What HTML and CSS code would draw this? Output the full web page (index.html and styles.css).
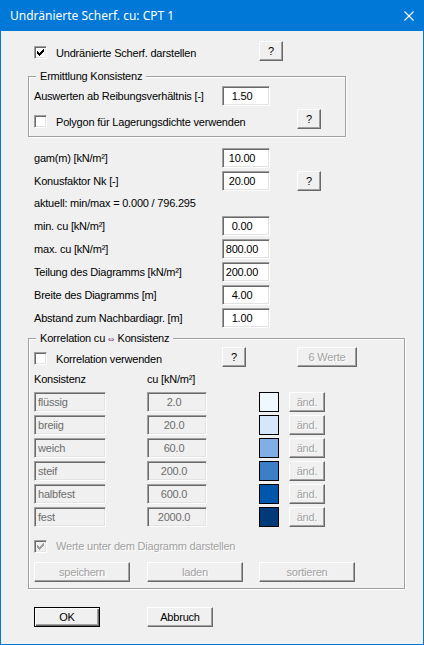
FILE: index.html
```html
<!DOCTYPE html>
<html lang="de">
<head>
<meta charset="utf-8">
<title>Undränierte Scherf. cu: CPT 1</title>
<link rel="stylesheet" href="styles.css">
</head>
<body>
<div class="window">
  <div class="titlebar">
    <span class="title">Undränierte Scherf. cu: CPT 1</span>
    <svg class="close" width="10" height="10" viewBox="0 0 10 10"><path d="M0.5 0.5L9.5 9.5M9.5 0.5L0.5 9.5" stroke="#fff" stroke-width="1.1" fill="none"/></svg>
  </div>

  <div class="client">
    <div class="row row-top">
      <label class="check w-225 drop-5"><span class="cb"><svg class="tick" width="7" height="7" viewBox="0 0 7 7"><path d="M0 2h1v3h-1zM1 3h1v3h-1zM2 4h1v3h-1zM3 3h1v3h-1zM4 2h1v3h-1zM5 1h1v3h-1zM6 0h1v3h-1z"/></svg></span><span>Undränierte Scherf. darstellen</span></label>
      <span class="btn q">?</span>
    </div>

    <div class="group g-konsistenz">
      <span class="legend">Ermittlung Konsistenz</span>
      <div class="row">
        <span class="lbl">Auswerten ab Reibungsverhältnis [-]</span>
        <span class="edit">1.50</span>
      </div>
      <div class="row mt-3">
        <label class="check w-263 drop-6"><span class="cb"></span><span>Polygon für Lagerungsdichte verwenden</span></label>
        <span class="btn q">?</span>
      </div>
    </div>

    <div class="row mt-11">
      <span class="lbl">gam(m) [kN/m²]</span>
      <span class="edit">10.00</span>
    </div>
    <div class="row mt-3">
      <span class="lbl">Konusfaktor Nk [-]</span>
      <span class="edit">20.00</span>
      <span class="btn q gap-27">?</span>
    </div>
    <div class="row mt-2">
      <span class="lbl">aktuell: min/max = 0.000 / 796.295</span>
    </div>
    <div class="row mt-3">
      <span class="lbl">min. cu [kN/m²]</span>
      <span class="edit">0.00</span>
    </div>
    <div class="row mt-3">
      <span class="lbl">max. cu [kN/m²]</span>
      <span class="edit">800.00</span>
    </div>
    <div class="row mt-3">
      <span class="lbl">Teilung des Diagramms [kN/m²]</span>
      <span class="edit">200.00</span>
    </div>
    <div class="row mt-3">
      <span class="lbl">Breite des Diagramms [m]</span>
      <span class="edit">4.00</span>
    </div>
    <div class="row mt-3">
      <span class="lbl">Abstand zum Nachbardiagr. [m]</span>
      <span class="edit">1.00</span>
    </div>

    <div class="group g-korrelation">
      <span class="legend">Korrelation cu <span class="arrow">⇔</span> Konsistenz</span>
      <div class="row">
        <label class="check w-188 drop-5"><span class="cb"></span><span>Korrelation verwenden</span></label>
        <span class="btn q">?</span>
        <span class="btn disabled werte">6 Werte</span>
      </div>

      <div class="grid mt-2 head">
        <span>Konsistenz</span>
        <span>cu [kN/m²]</span>
      </div>

      <div class="grid mt-3">
        <span class="edit off name">flüssig</span>
        <span class="edit off val">2.0</span>
        <span class="swatch" style="background:#f0f8ff"></span>
        <span class="btn disabled aend">änd.</span>
      </div>
      <div class="grid mt-3">
        <span class="edit off name">breiig</span>
        <span class="edit off val">20.0</span>
        <span class="swatch" style="background:#d5e7fa"></span>
        <span class="btn disabled aend">änd.</span>
      </div>
      <div class="grid mt-3">
        <span class="edit off name">weich</span>
        <span class="edit off val">60.0</span>
        <span class="swatch" style="background:#7fafe4"></span>
        <span class="btn disabled aend">änd.</span>
      </div>
      <div class="grid mt-3">
        <span class="edit off name">steif</span>
        <span class="edit off val">200.0</span>
        <span class="swatch" style="background:#3b7fc6"></span>
        <span class="btn disabled aend">änd.</span>
      </div>
      <div class="grid mt-3">
        <span class="edit off name">halbfest</span>
        <span class="edit off val">600.0</span>
        <span class="swatch" style="background:#0056aa"></span>
        <span class="btn disabled aend">änd.</span>
      </div>
      <div class="grid mt-3">
        <span class="edit off name">fest</span>
        <span class="edit off val">2000.0</span>
        <span class="swatch" style="background:#003a78"></span>
        <span class="btn disabled aend">änd.</span>
      </div>

      <div class="row mt-9">
        <label class="check disabled-check"><span class="cb"><svg class="tick" width="7" height="7" viewBox="0 0 7 7"><path d="M0 2h1v3h-1zM1 3h1v3h-1zM2 4h1v3h-1zM3 3h1v3h-1zM4 2h1v3h-1zM5 1h1v3h-1zM6 0h1v3h-1z"/></svg></span><span>Werte unter dem Diagramm darstellen</span></label>
      </div>

      <div class="grid mt-6">
        <span class="btn disabled wide">speichern</span>
        <span class="btn disabled wide">laden</span>
        <span class="btn disabled wide">sortieren</span>
      </div>
    </div>

    <div class="grid mt-18">
      <span class="btn default dlg">OK</span>
      <span class="btn dlg">Abbruch</span>
    </div>
  </div>
</div>
</body>
</html>
```

FILE: styles.css
```css
html, body {
  margin: 0;
  padding: 0;
  background: #f0f0f0;
}

body {
  font-family: "Liberation Sans", Arial, sans-serif;
  font-size: 11px;
  letter-spacing: -0.2px;
  color: #000;
}

/* dialog frame */
.window {
  width: 424px;
  height: 645px;
  box-sizing: border-box;
  border: 1px solid #0078d7;
  border-top: 0;
  background: #f0f0f0;
  display: flex;
  flex-direction: column;
}

.titlebar {
  flex: none;
  height: 31px;
  background: #0078d7;
  color: #fff;
  display: flex;
  align-items: center;
  padding-left: 9px;
  font-family: "Noto Sans", "Open Sans", sans-serif;
  font-size: 12px;
  letter-spacing: 0;
}

.close {
  margin-left: auto;
  margin-right: 9px;
}

.client {
  padding: 10px 0 0 33px;
}

/* generic rows */
.row {
  display: flex;
  align-items: center;
  height: 20px;
}

.row-top,
.g-konsistenz .row.mt-3,
.g-korrelation > .row:first-of-type {
  align-items: flex-start;
}

.grid {
  display: grid;
  grid-template-columns: 113px 112px 30px auto;
  align-items: center;
  justify-items: start;
  height: 20px;
}

.head {
  height: 20px;
}

.mt-2 { margin-top: 2px; }
.mt-3 { margin-top: 3px; }
.mt-6 { margin-top: 6px; }
.mt-9 { margin-top: 9px; }
.mt-11 { margin-top: 11px; }
.mt-18 { margin-top: 18px; }

.lbl {
  width: 188px;
  white-space: nowrap;
}

/* checkbox with its caption */
.check {
  display: flex;
  align-items: center;
  height: 13px;
  white-space: nowrap;
}

.w-188 { width: 188px; }
.w-225 { width: 225px; }
.w-263 { width: 263px; }
.drop-5 { margin-top: 5px; }
.drop-6 { margin-top: 6px; }

.cb {
  box-sizing: border-box;
  width: 13px;
  height: 13px;
  flex: none;
  margin-right: 9px;
  background: #fff;
  border: 1px solid;
  border-color: #a0a0a0 #fff #fff #a0a0a0;
  box-shadow: inset 1px 1px 0 #696969, inset -1px -1px 0 #e3e3e3;
  position: relative;
}

.tick {
  position: absolute;
  left: 2px;
  top: 2px;
  fill: #000;
  shape-rendering: crispEdges;
}

.disabled-check {
  color: #a0a0a0;
  text-shadow: 1px 1px 0 #fff;
}

.disabled-check .cb {
  background: #f0f0f0;
}

.disabled-check .tick {
  fill: #a0a0a0;
}

/* edit fields */
.edit {
  box-sizing: border-box;
  width: 48px;
  height: 20px;
  line-height: 18px;
  padding-right: 8px;
  text-align: center;
  background: #fff;
  border: 1px solid;
  border-color: #a0a0a0 #fff #fff #a0a0a0;
  box-shadow: inset 1px 1px 0 #696969, inset -1px -1px 0 #e3e3e3;
  white-space: nowrap;
}

.edit.off {
  background: #f0f0f0;
  color: #6d6d6d;
}

.edit.name {
  width: 72px;
  text-align: left;
  padding: 0 0 0 3px;
}

.edit.val {
  width: 60px;
  padding-right: 6px;
}

/* push buttons */
.btn {
  box-sizing: border-box;
  height: 20px;
  display: flex;
  align-items: center;
  justify-content: center;
  background: #f0f0f0;
  border: 1px solid;
  border-color: #fff #696969 #696969 #fff;
  box-shadow: inset -1px -1px 0 #a0a0a0;
  white-space: nowrap;
}

.btn.disabled {
  color: #a0a0a0;
  text-shadow: 1px 1px 0 #fff;
}

.btn.default {
  border-color: #000;
  box-shadow: inset 1px 1px 0 #fff, inset -1px -1px 0 #696969, inset -2px -2px 0 #a0a0a0;
}

.q { width: 24px; }
.gap-27 { margin-left: 27px; }
.werte { width: 60px; margin-left: 51px; }
.aend { width: 36px; }
.wide { width: 96px; }
.dlg { width: 66px; }

.swatch {
  box-sizing: border-box;
  width: 20px;
  height: 20px;
  border: 1px solid #000;
}

/* group boxes */
.group {
  position: relative;
  box-sizing: border-box;
  margin-left: -6px;
  padding-left: 5px;
  border: 1px solid #a0a0a0;
  box-shadow: 1px 1px 0 #fff, inset 1px 1px 0 #fff;
}

.g-konsistenz {
  width: 318px;
  margin-top: 15px;
  padding-top: 9px;
  padding-bottom: 7px;
}

.g-korrelation {
  width: 377px;
  margin-top: 10px;
  padding-top: 8px;
  padding-bottom: 6px;
}

.legend {
  position: absolute;
  top: -7px;
  left: 7px;
  height: 13px;
  line-height: 13px;
  padding: 0 4px;
  background: #f0f0f0;
  white-space: nowrap;
}

.arrow {
  font-family: "DejaVu Sans", sans-serif;
  font-size: 8px;
  color: #8c4f8c;
  letter-spacing: 0;
}
```
